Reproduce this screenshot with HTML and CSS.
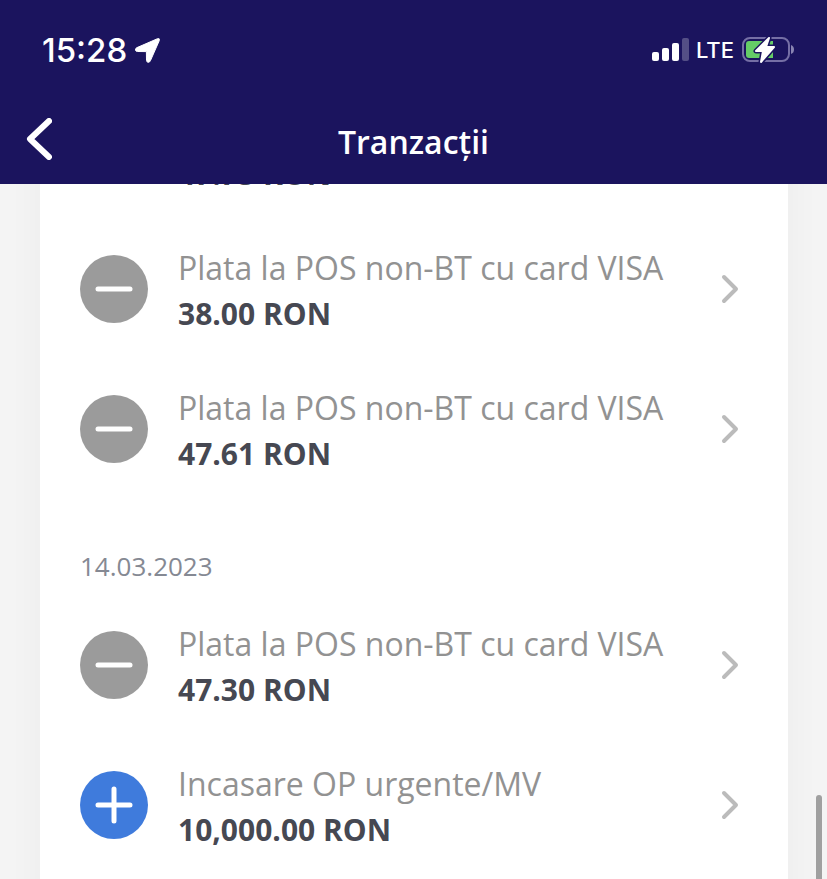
FILE: index.html
```html
<!DOCTYPE html>
<html lang="ro">
<head>
<meta charset="utf-8">
<meta name="viewport" content="width=device-width, initial-scale=1">
<title>Tranzacții</title>
<link rel="stylesheet" href="styles.css">
</head>
<body>
<header class="header">
  <div class="status">
    <div class="status-group">
      <span class="clock">15:28</span>
      <svg class="location" viewBox="0 0 25 25" aria-hidden="true"><path d="M22.500 .7Q25 0 24.300 2.500L15.500 22.500Q14.800 24.500 13 24.300Q11.500 24 11.500 22.300L11.400 13.600L2.500 13.500Q.8 13.500 .5 12Q.3 10.300 2 9.600Z" fill="#fff" stroke="#fff"/></svg>
    </div>
    <div class="status-group status-right">
      <svg class="signal" viewBox="0 0 37 24" aria-hidden="true"><g fill="#fff"><rect y="14" width="7" height="9" rx="2"/><rect x="10" y="10" width="7" height="13" rx="2"/><rect x="20" y="5" width="7" height="18" rx="2"/><rect x="30" width="7" height="23" rx="2" opacity=".25"/></g></svg>
      <span class="network">LTE</span>
      <svg class="battery" viewBox="0 0 54 28" aria-hidden="true"><rect x="2" y="2" width="46" height="23" rx="7" fill="none" stroke="#756fa5" stroke-width="2"/><path d="M50 9Q53 10 53 13.500T50 18Z" fill="#8984b2"/><path d="M8 5H32V22H8Q5 22 5 19V8Q5 5 8 5Z" fill="#65cc67"/><path d="M28 2L15 15H22L20 26L33 11H25Z" fill="#fff" stroke="#1b145e" stroke-width="5" stroke-linejoin="round"/><path d="M28 2L15 15H22L20 26L33 11H25Z" fill="#fff" stroke="#fff" stroke-width="2" stroke-linejoin="round"/></svg>
    </div>
  </div>
  <nav class="nav">
    <button class="back" type="button" aria-label="Înapoi"><svg viewBox="0 0 26 42" aria-hidden="true"><path d="M23 3L4 21L23 39" fill="none" stroke="#fff" stroke-width="6" stroke-linecap="round" stroke-linejoin="round"/></svg></button>
    <h1 class="title">Tranzacții</h1>
  </nav>
</header>
<main class="content">
  <div class="card">
    <a class="row" href="#">
      <svg class="badge debit" viewBox="0 0 68 68" aria-hidden="true"><path d="M18 34H50"/></svg>
      <span class="details"><span class="name">Plata la POS non-BT cu card VISA</span><strong class="amount">47.73 RON</strong></span>
      <svg class="chevron" viewBox="0 0 18 30" aria-hidden="true"><path d="M3 3L15 15L3 27"/></svg>
    </a>
    <a class="row" href="#">
      <svg class="badge debit" viewBox="0 0 68 68" aria-hidden="true"><path d="M18 34H50"/></svg>
      <span class="details"><span class="name">Plata la POS non-BT cu card VISA</span><strong class="amount">38.00 RON</strong></span>
      <svg class="chevron" viewBox="0 0 18 30" aria-hidden="true"><path d="M3 3L15 15L3 27"/></svg>
    </a>
    <a class="row" href="#">
      <svg class="badge debit" viewBox="0 0 68 68" aria-hidden="true"><path d="M18 34H50"/></svg>
      <span class="details"><span class="name">Plata la POS non-BT cu card VISA</span><strong class="amount">47.61 RON</strong></span>
      <svg class="chevron" viewBox="0 0 18 30" aria-hidden="true"><path d="M3 3L15 15L3 27"/></svg>
    </a>
    <h2 class="date">14.03.2023</h2>
    <a class="row" href="#">
      <svg class="badge debit" viewBox="0 0 68 68" aria-hidden="true"><path d="M18 34H50"/></svg>
      <span class="details"><span class="name">Plata la POS non-BT cu card VISA</span><strong class="amount">47.30 RON</strong></span>
      <svg class="chevron" viewBox="0 0 18 30" aria-hidden="true"><path d="M3 3L15 15L3 27"/></svg>
    </a>
    <a class="row" href="#">
      <svg class="badge credit" viewBox="0 0 68 68" aria-hidden="true"><path d="M18 34H50M34 18V50"/></svg>
      <span class="details"><span class="name">Incasare OP urgente/MV</span><strong class="amount">10,000.00 RON</strong></span>
      <svg class="chevron" viewBox="0 0 18 30" aria-hidden="true"><path d="M3 3L15 15L3 27"/></svg>
    </a>
  </div>
  <div class="scroll-thumb"></div>
</main>
</body>
</html>
```
FILE: styles.css
```css
* { box-sizing: border-box; }
body {
  margin: 0;
  height: 100vh;
  display: flex;
  flex-direction: column;
  overflow: hidden;
  background: #f4f4f4;
  font-family: "Open Sans", "Noto Sans", sans-serif;
}
.header {
  flex: none;
  background: #1b145e;
  color: #fff;
}
.status {
  display: flex;
  justify-content: space-between;
  align-items: center;
  height: 100px;
  padding: 0 32px 0 42px;
  font-family: Inter, sans-serif;
}
.status-group { display: flex; align-items: center; gap: 8px; }
.clock { font-size: 33px; font-weight: 500; }
.location { width: 25px; height: 25px; }
.signal { width: 37px; height: 24px; }
.network { font-size: 22px; font-weight: 500; }
.status-right { gap: 7px; }
.battery { width: 54px; height: 28px; }
.nav {
  display: grid;
  grid-template-columns: 52px 1fr 52px;
  align-items: center;
  height: 84px;
}
.back {
  display: flex;
  justify-content: flex-end;
  padding: 0 0 6px;
  border: 0;
  background: none;
}
.back svg { width: 26px; height: 42px; }
.title {
  margin: 0;
  font-size: 32px;
  line-height: 84px;
  font-weight: 600;
  text-align: center;
}
.content {
  position: relative;
  flex: 1;
  min-height: 0;
  overflow: hidden;
}
/* The list is shown part-way scrolled, under the header. */
.card {
  margin: -105px 39px 0 40px;
  padding: 0 49px 40px 40px;
  background: #fff;
  box-shadow: 0 0 36px rgba(0, 0, 0, .04);
}
.row {
  display: flex;
  align-items: center;
  height: 140px;
  color: inherit;
  text-decoration: none;
}
.badge {
  flex: none;
  width: 68px;
  height: 68px;
  margin-right: 30px;
  border-radius: 50%;
  fill: none;
  stroke: #fff;
  stroke-width: 5;
  stroke-linecap: round;
}
.debit { background: #9b9b9b; }
.credit { background: #3f7bdc; }
.details { flex: 1; min-width: 0; padding-top: 3px; }
.name, .amount { display: block; line-height: 46px; white-space: nowrap; }
.name { font-size: 32px; font-weight: 400; color: #929292; }
.amount { font-size: 30px; font-weight: 700; color: #464852; }
.chevron {
  flex: none;
  width: 18px;
  height: 30px;
  fill: none;
  stroke: #bbb;
  stroke-width: 4;
  stroke-linecap: round;
  stroke-linejoin: round;
}
.date {
  margin: 0;
  height: 96px;
  padding-top: 48px;
  font-size: 26px;
  line-height: 38px;
  font-weight: 400;
  color: #858993;
}
.scroll-thumb {
  position: absolute;
  right: 5px;
  bottom: -20px;
  width: 6px;
  height: 104px;
  border-radius: 3px;
  background: #a0a0a0;
}
```
